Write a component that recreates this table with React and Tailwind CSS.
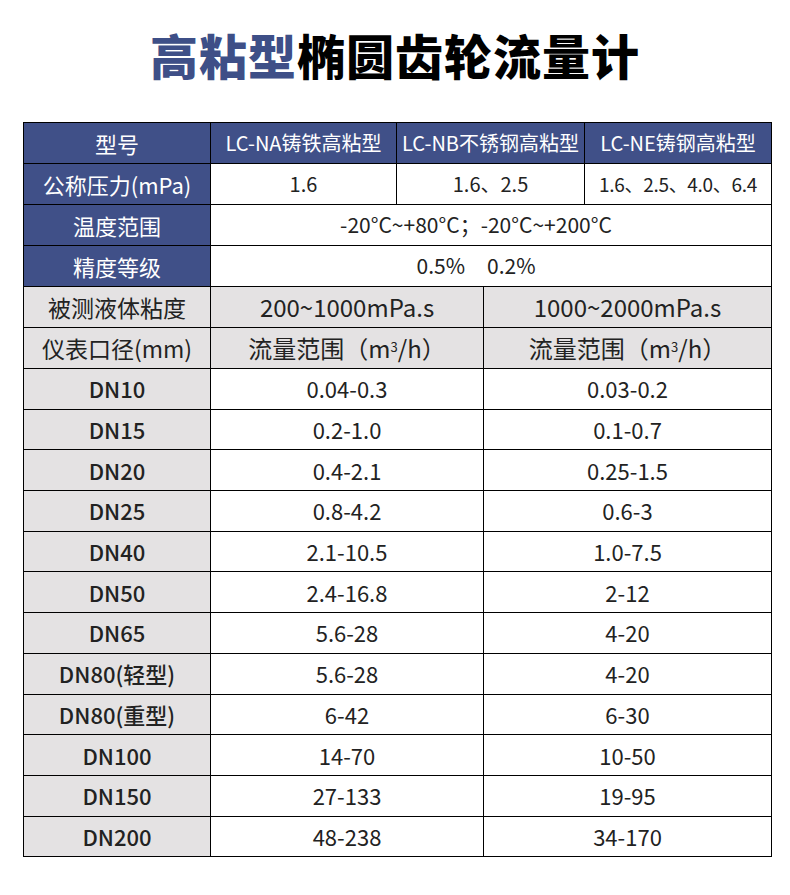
export default function App() {
  const rows = [
    ["DN10", "0.04-0.3", "0.03-0.2"],
    ["DN15", "0.2-1.0", "0.1-0.7"],
    ["DN20", "0.4-2.1", "0.25-1.5"],
    ["DN25", "0.8-4.2", "0.6-3"],
    ["DN40", "2.1-10.5", "1.0-7.5"],
    ["DN50", "2.4-16.8", "2-12"],
    ["DN65", "5.6-28", "4-20"],
    ["DN80(轻型)", "5.6-28", "4-20"],
    ["DN80(重型)", "6-42", "6-30"],
    ["DN100", "14-70", "10-50"],
    ["DN150", "27-133", "19-95"],
    ["DN200", "48-238", "34-170"],
  ];

  const font = { fontFamily: '"Noto Sans CJK SC", "Noto Sans", sans-serif' };
  const td = "border border-black text-center p-0 whitespace-nowrap";
  const blue = "bg-[#405088] text-white";

  return (
    <div className="w-[790px] h-[895px] bg-white" style={font}>
      <h1 className="pt-[22px] text-center text-[48px] font-black leading-[64px] tracking-[1px] text-black">
        <span className="text-[#3e4f87]">高粘型</span>椭圆齿轮流量计
      </h1>
      <div className="pt-[36px] pl-[23px]">
        <table className="table-fixed border-collapse w-[748px] text-[#222]">
          <colgroup>
            <col className="w-[187px]" />
            <col className="w-[186px]" />
            <col className="w-[87px]" />
            <col className="w-[101px]" />
            <col className="w-[187px]" />
          </colgroup>
          <tbody>
            <tr className="h-[41px]">
              <td className={`${td} ${blue} text-[22px]`}>型号</td>
              <td className={`${td} ${blue} text-[20px]`}>LC-NA铸铁高粘型</td>
              <td colSpan={2} className={`${td} ${blue} text-[20px]`}>LC-NB不锈钢高粘型</td>
              <td className={`${td} ${blue} text-[20px]`}>LC-NE铸钢高粘型</td>
            </tr>
            <tr className="h-[41px]">
              <td className={`${td} ${blue} text-[22px]`}>公称压力(mPa)</td>
              <td className={`${td} text-[20px]`}>1.6</td>
              <td colSpan={2} className={`${td} text-[20px]`}>1.6、2.5</td>
              <td className={`${td} text-[19px] tracking-[-0.3px]`}>1.6、2.5、4.0、6.4</td>
            </tr>
            <tr className="h-[41px]">
              <td className={`${td} ${blue} text-[22px]`}>温度范围</td>
              <td colSpan={4} className={`${td} text-[21px] pr-[30px]`}>-20°C~+80°C；-20°C~+200°C</td>
            </tr>
            <tr className="h-[41px]">
              <td className={`${td} ${blue} text-[22px]`}>精度等级</td>
              <td colSpan={4} className={`${td} text-[21px] pr-[30px]`}>
                <span className="inline-flex gap-[22px]">
                  <span>0.5%</span>
                  <span>0.2%</span>
                </span>
              </td>
            </tr>
            <tr className="h-[41px] bg-[#e4e2e3]">
              <td className={`${td} text-[23px]`}>被测液体粘度</td>
              <td colSpan={2} className={`${td} text-[24px]`}>200~1000mPa.s</td>
              <td colSpan={2} className={`${td} text-[24px]`}>1000~2000mPa.s</td>
            </tr>
            <tr className="h-[41px] bg-[#e4e2e3]">
              <td className={`${td} text-[23px]`}>仪表口径(mm)</td>
              <td colSpan={2} className={`${td} text-[24px]`}>
                流量范围（m<sup className="text-[13px]">3</sup>/h）
              </td>
              <td colSpan={2} className={`${td} text-[24px]`}>
                流量范围（m<sup className="text-[13px]">3</sup>/h）
              </td>
            </tr>
            {rows.map(([dn, a, b]) => (
              <tr key={dn} className="h-[40.7px] text-[22px]">
                <td className={`${td} bg-[#e4e2e3] font-medium`}>{dn}</td>
                <td colSpan={2} className={td}>{a}</td>
                <td colSpan={2} className={td}>{b}</td>
              </tr>
            ))}
          </tbody>
        </table>
      </div>
    </div>
  );
}
